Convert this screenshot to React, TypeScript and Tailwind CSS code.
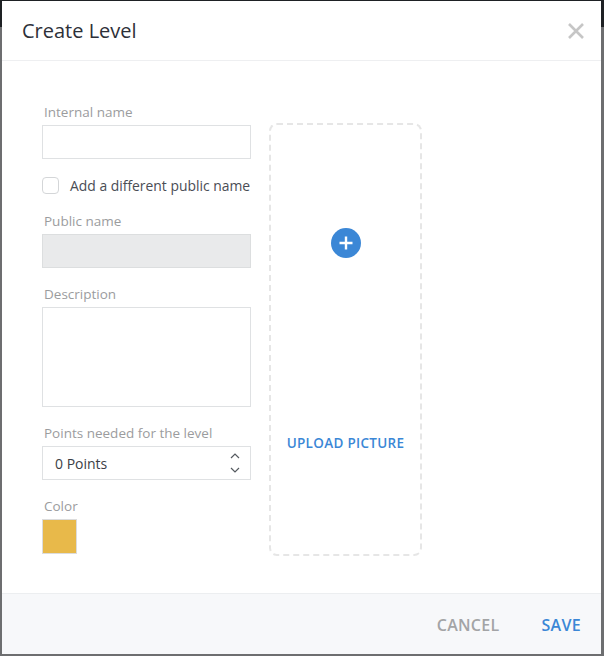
import React from "react";

const font = { fontFamily: "'Open Sans', Lato, sans-serif" };

function Label({ children }: { children: React.ReactNode }) {
  return <div className="h-[18px] pl-[2px] text-[13.5px] leading-[18px] text-[#9b9c9e] mb-[4px]">{children}</div>;
}

export default function App() {
  return (
    <div
      className="w-[604px] h-[656px] pt-[1px] pl-[2px] pr-[3px] pb-[2px] bg-[linear-gradient(to_bottom,#1e2124_27px,#6d6e70_27px)]"
      style={font}
    >
      <div className="w-full h-full bg-white flex flex-col">
        <div className="h-[60px] flex items-center justify-between pl-[20px] pr-[16px] border-b border-[#eeeff1]">
          <div className="text-[20px] text-[#2d3038] pt-[1px]">Create Level</div>
          <svg width="18" height="18" viewBox="0 0 18 18" className="mt-[1px]">
            <path d="M2 2 L16 16 M16 2 L2 16" stroke="#c6c6c6" strokeWidth="2.6" strokeLinecap="butt" />
          </svg>
        </div>
        <div className="flex-1 flex pl-[40px] pt-[42px]">
          <div className="w-[209px] flex flex-col">
            <Label>Internal name</Label>
            <div className="h-[34px] border border-[#dfe1e3] bg-white" />
            <div className="flex items-center mt-[18px] h-[17px]">
              <div className="w-[17px] h-[17px] rounded-[4px] border border-[#d4d6d8] bg-white" />
              <span className="ml-[11px] text-[13.9px] text-[#4a4d55] leading-[17px] whitespace-nowrap">Add a different public name</span>
            </div>
            <div className="mt-[18px]">
              <Label>Public name</Label>
            </div>
            <div className="h-[34px] border border-[#dcdedf] bg-[#e9eaeb]" />
            <div className="mt-[17px]">
              <Label>Description</Label>
            </div>
            <div className="h-[100px] border border-[#dfe1e3] bg-white" />
            <div className="mt-[17px]">
              <Label>Points needed for the level</Label>
            </div>
            <div className="h-[34px] border border-[#dfe1e3] bg-white flex items-center justify-between pl-[12px] pr-[9px]">
              <span className="text-[14px] text-[#3b3e45]">0 Points</span>
              <svg width="12" height="24" viewBox="0 0 12 24">
                <path d="M2 7 L6 3 L10 7" fill="none" stroke="#555a60" strokeWidth="1.2" />
                <path d="M2 17 L6 21 L10 17" fill="none" stroke="#555a60" strokeWidth="1.2" />
              </svg>
            </div>
            <div className="mt-[17px]">
              <Label>Color</Label>
            </div>
            <div className="w-[35px] h-[35px] border border-[#dcdcdc] bg-[#e8b94a]" />
          </div>
          <div className="ml-[18px] mt-[20px] w-[153px] h-[433px] border-2 border-dashed border-[#e6e6e6] rounded-[8px] flex flex-col items-center">
            <div className="mt-[103px] w-[30px] h-[30px] rounded-full bg-[#3b87d6] flex items-center justify-center">
              <svg width="16" height="16" viewBox="0 0 16 16">
                <path d="M8 1.5 V14.5 M1.5 8 H14.5" stroke="#ffffff" strokeWidth="2.4" />
              </svg>
            </div>
            <div className="mt-[175px] text-[13.5px] font-semibold tracking-[0.3px] text-[#3b87d6] whitespace-nowrap">UPLOAD PICTURE</div>
          </div>
        </div>
        <div className="h-[61px] bg-[#f7f8fa] border-t border-[#eceef0] flex items-center justify-end pr-[20px] pt-[1px]">
          <span className="text-[16px] font-semibold tracking-[0.3px] text-[#a3a4a6]">CANCEL</span>
          <span className="ml-[42px] text-[16px] font-semibold tracking-[0.3px] text-[#3b87d6]">SAVE</span>
        </div>
      </div>
    </div>
  );
}
